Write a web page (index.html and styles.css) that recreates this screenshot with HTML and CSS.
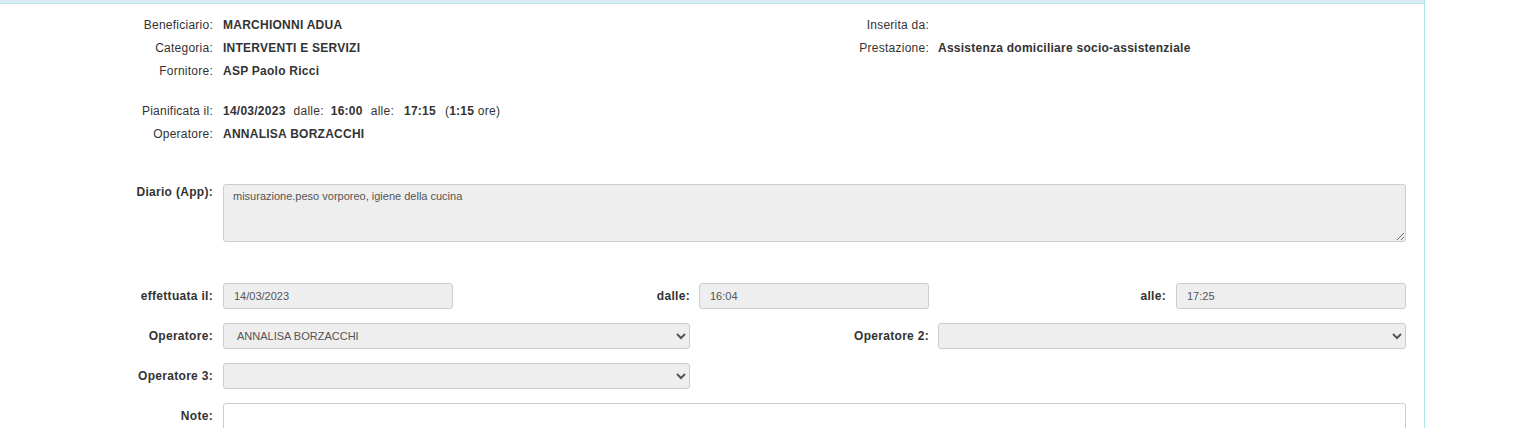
FILE: index.html
```html
<!DOCTYPE html>
<html lang="it">
<head>
<meta charset="utf-8">
<title>Dettaglio prestazione</title>
<link rel="stylesheet" href="styles.css">
</head>
<body>
<div class="panel">
  <div class="panel-heading"></div>
  <div class="panel-body">
    <div class="info">
      <div class="lbl">Beneficiario:</div><div class="val b">MARCHIONNI ADUA</div>
      <div class="lbl lbl2">Inserita da:</div><div class="val val2 b"></div>

      <div class="lbl">Categoria:</div><div class="val b">INTERVENTI E SERVIZI</div>
      <div class="lbl lbl2">Prestazione:</div><div class="val val2 b">Assistenza domiciliare socio-assistenziale</div>

      <div class="lbl">Fornitore:</div><div class="val b">ASP Paolo Ricci</div>
      <div class="spacer"></div>

      <div class="lbl">Pianificata il:</div>
      <div class="val wide"><b>14/03/2023</b><span class="sp1">dalle:</span><b class="sp2">16:00</b><span class="sp3">alle:</span><b class="sp4">17:15</b><span class="sp5">(<b>1:15</b> ore)</span></div>

      <div class="lbl">Operatore:</div><div class="val b wide">ANNALISA BORZACCHI</div>
    </div>

    <div class="form">
      <div class="row row-full row-top row-diario">
        <label class="flbl flbl-top">Diario (App):</label>
        <textarea class="ctrl ta" readonly>misurazione.peso vorporeo, igiene della cucina</textarea>
      </div>

      <div class="row row-three">
        <label class="flbl">effettuata il:</label>
        <input class="ctrl" type="text" value="14/03/2023" readonly>
        <label class="flbl flbl-m">dalle:</label>
        <input class="ctrl" type="text" value="16:04" readonly>
        <label class="flbl">alle:</label>
        <input class="ctrl" type="text" value="17:25" readonly>
      </div>

      <div class="row row-two">
        <label class="flbl">Operatore:</label>
        <select class="ctrl sel" disabled><option>ANNALISA BORZACCHI</option></select>
        <label class="flbl flbl-m">Operatore 2:</label>
        <select class="ctrl sel" disabled><option></option></select>
      </div>

      <div class="row row-two">
        <label class="flbl">Operatore 3:</label>
        <select class="ctrl sel" disabled><option></option></select>
      </div>

      <div class="row row-full row-top">
        <label class="flbl flbl-note">Note:</label>
        <textarea class="ctrl ta ta-note"></textarea>
      </div>
    </div>
  </div>
</div>
</body>
</html>
```

FILE: styles.css
```css
html, body {
  margin: 0;
  padding: 0;
  background: #ffffff;
}

body {
  font-family: "Liberation Sans", Arial, sans-serif;
  font-size: 12px;
  color: #333333;
  overflow: hidden;
}

.panel {
  width: 1424px;
  height: 428px;
  border-right: 1px solid #ade5ef;
  box-sizing: content-box;
  overflow: hidden;
}

.panel-heading {
  height: 3px;
  background: #d9edf7;
  border-bottom: 1px solid #c3e7f2;
}

.info {
  display: grid;
  grid-template-columns: 223px 493px 222px 1fr;
  grid-template-rows: 23px 23px 23px 17px 23px 23px;
  line-height: 23px;
  padding-top: 10px;
  letter-spacing: 0.25px;
}

.info .lbl {
  text-align: right;
  padding-right: 10px;
  color: #333;
}

.info .lbl2 {
  padding-right: 9px;
}

.info .val {
  white-space: nowrap;
  color: #333;
}

.info .b,
.info b {
  font-weight: bold;
}

.info .wide {
  grid-column: 2 / span 3;
}

.info .spacer {
  grid-column: 1 / -1;
}

.info .sp1 { margin-left: 8px; }
.info .sp2 { margin-left: 7px; }
.info .sp3 { margin-left: 8px; }
.info .sp4 { margin-left: 10px; }
.info .sp5 { margin-left: 9px; }

.form {
  margin-top: 38px;
}

.row {
  display: grid;
  align-items: center;
  margin-bottom: 14px;
}

.row-full {
  grid-template-columns: 223px 1183px;
}

.row-top {
  align-items: start;
}

.row-diario {
  margin-bottom: 41px;
}

.row-three {
  grid-template-columns: 223px 230px 246px 230px 247px 230px;
}

.row-two {
  grid-template-columns: 223px 467px 248px 468px;
}

.flbl {
  font-weight: bold;
  text-align: right;
  padding-right: 10px;
  line-height: 14px;
  letter-spacing: 0.3px;
  color: #333;
}

.flbl-m {
  padding-right: 9px;
}

.flbl-top {
  padding-top: 1px;
}

.flbl-note {
  padding-top: 6px;
}

.ctrl {
  box-sizing: border-box;
  width: 100%;
  height: 26px;
  margin: 0;
  padding: 0 10px;
  font-family: "Liberation Sans", Arial, sans-serif;
  font-size: 11px;
  color: #555555;
  background: #eeeeee;
  border: 1px solid #cccccc;
  border-radius: 3px;
  outline: none;
}

.sel {
  padding-left: 9px;
  padding-right: 6px;
  opacity: 1;
  color: #555555;
}

.ta {
  height: 58px;
  padding: 5px 9px;
  line-height: 13px;
  resize: vertical;
}

.ta-note {
  background: #ffffff;
}
```
